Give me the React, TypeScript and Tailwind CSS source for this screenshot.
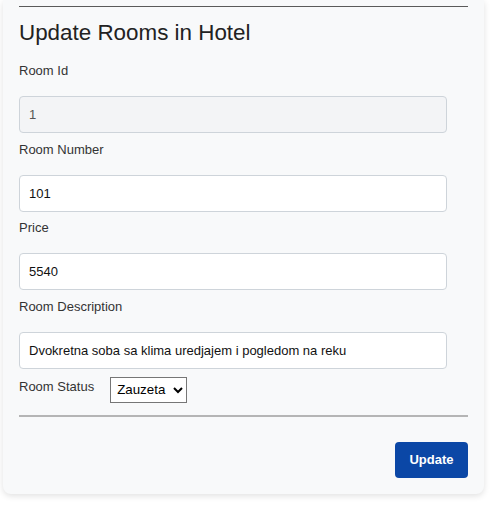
import React from "react";

const font = { fontFamily: '"Liberation Sans", Arial, sans-serif' };

function Field({ label, value, disabled }: { label: string; value: string; disabled?: boolean }) {
  return (
    <div className="flex flex-col">
      <label className="text-[13px] leading-[16px] text-[#333] h-[16px]">{label}</label>
      <input
        readOnly
        value={value}
        disabled={disabled}
        className={`mt-[17px] w-[428px] h-[37px] rounded-[4px] border border-[#ced4da] px-[9px] text-[13px] outline-none ${
          disabled ? "bg-[#f3f4f6] text-[#555]" : "bg-white text-[#111]"
        }`}
        style={font}
      />
    </div>
  );
}

export default function App() {
  return (
    <div className="bg-white min-h-[509px] pl-[3px] w-[498px]" style={font}>
      <div className="w-[481px] bg-[#f8f9fa] rounded-b-[8px] shadow-[0_2px_6px_rgba(0,0,0,0.12)] px-4 pt-[6px] pb-[16px]">
        <div className="h-px bg-[#5a5a5a]" />
        <h3 className="mt-[12px] text-[22.4px] leading-[28px] text-[#222]">Update Rooms in Hotel</h3>
        <div className="mt-[16px] flex flex-col gap-[8.67px]">
          <Field label="Room Id" value="1" disabled />
          <Field label="Room Number" value="101" />
          <Field label="Price" value="5540" />
          <Field label="Room Description" value="Dvokretna soba sa klima uredjajem i pogledom na reku" />
        </div>
        <div className="mt-[8px] flex items-start">
          <span className="text-[13px] leading-[16px] text-[#333] mt-[2px]">Room Status</span>
          <select
            defaultValue="Zauzeta"
            className="ml-[16px] h-[26px] w-[77px] border border-[#767676] bg-white text-[13.33px] text-black px-[2px]"
            style={font}
          >
            <option>Zauzeta</option>
            <option>Slobodna</option>
          </select>
        </div>
        <div className="mt-[12px] h-[2px] bg-[#b5b5b5]" />
        <div className="mt-[25px] flex justify-end">
          <button className="w-[73px] h-[36px] rounded-[4px] bg-[#0b47a6] text-white text-[13px] font-bold">
            Update
          </button>
        </div>
      </div>
    </div>
  );
}
